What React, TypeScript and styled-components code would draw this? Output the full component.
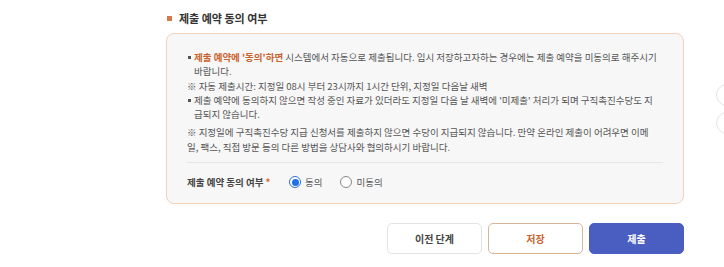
import React from "react";
import styled, { createGlobalStyle } from "styled-components";

const Global = createGlobalStyle`
  html, body { margin: 0; padding: 0; background: #ffffff; }
  body { font-family: "Noto Sans CJK KR", "Noto Sans", sans-serif; color: #444; }
  * { box-sizing: border-box; }
`;

const Page = styled.div`
  position: relative;
  width: 724px;
  height: 267px;
  overflow: hidden;
  padding: 11px 40px 0 166px;
`;

const SectionTitle = styled.div`
  display: flex;
  align-items: center;
  gap: 7px;
  height: 14px;
  font-size: 11px;
  font-weight: 600;
  color: #333;
  padding-left: 1px;
`;

const Square = styled.span`
  width: 5px;
  height: 5px;
  background: #d97a45;
`;

const Box = styled.div`
  margin-top: 8px;
  height: 171px;
  border: 1px solid #f3d2bb;
  border-radius: 8px;
  background: #f7f7f7;
  padding: 16px 20px 0 20px;
`;

const List = styled.div`
  display: flex;
  flex-direction: column;
  font-size: 9.5px;
  line-height: 14.3px;
  color: #555;
  white-space: nowrap;
`;

const Bullet = styled.div`
  position: relative;
  padding-left: 7px;
  &::before {
    content: "";
    position: absolute;
    left: 1px;
    top: 6px;
    width: 3px;
    height: 3px;
    background: #555;
  }
`;

const Note = styled.div<{ $gap?: number }>`
  margin-top: ${(p) => p.$gap ?? 0}px;
`;

const Em = styled.strong`
  color: #c8632f;
  font-weight: 700;
`;

const Divider = styled.div`
  margin-top: 8px;
  height: 1px;
  background: #e6e6e6;
`;

const FieldRow = styled.div`
  display: flex;
  align-items: center;
  height: 38px;
  font-size: 9.5px;
`;

const FieldLabel = styled.span`
  font-weight: 600;
  color: #444;
  width: 102px;
`;

const Star = styled.span`
  color: #d9623a;
  margin-left: 2px;
`;

const RadioLabel = styled.label`
  display: inline-flex;
  align-items: center;
  gap: 4px;
  margin-right: 18px;
  color: #555;
`;

const RadioDot = styled.span<{ $on?: boolean }>`
  width: 12px;
  height: 12px;
  border-radius: 50%;
  border: 1px solid ${(p) => (p.$on ? "#2b6fe0" : "#888")};
  background: #fff;
  display: inline-flex;
  align-items: center;
  justify-content: center;
  &::after {
    content: "";
    width: 7px;
    height: 7px;
    border-radius: 50%;
    background: ${(p) => (p.$on ? "#1f6fe5" : "transparent")};
  }
`;

const Buttons = styled.div`
  display: flex;
  justify-content: flex-end;
  gap: 6px;
  margin-top: 19px;
`;

const Btn = styled.button<{ $variant: "plain" | "save" | "primary" }>`
  width: 95px;
  height: 31px;
  border-radius: 5px;
  font-family: inherit;
  font-size: 10px;
  font-weight: 700;
  cursor: pointer;
  border: 1px solid
    ${(p) =>
      p.$variant === "plain" ? "#e3e3e3" : p.$variant === "save" ? "#d8b597" : "#4a5ec1"};
  background: ${(p) => (p.$variant === "primary" ? "#4a5ec1" : "#fff")};
  color: ${(p) =>
    p.$variant === "plain" ? "#444" : p.$variant === "save" ? "#c8632f" : "#fff"};
`;

const EdgeCircle = styled.span<{ $top: number }>`
  position: absolute;
  left: 716px;
  top: ${(p) => p.$top}px;
  width: 22px;
  height: 22px;
  border-radius: 50%;
  border: 1px solid #e4e4e4;
  background: #fff;
`;

export default function App() {
  return (
    <>
      <Global />
      <Page>
        <SectionTitle>
          <Square />
          제출 예약 동의 여부
        </SectionTitle>
        <Box>
          <List>
            <Bullet>
              <Em>제출 예약에 '동의'하면</Em> 시스템에서 자동으로 제출됩니다. 임시 저장하고자하는 경우에는 제출 예약을 미동의로 해주시기
              <br />
              바랍니다.
            </Bullet>
            <Note>※ 자동 제출시간: 지정일 08시 부터 23시까지 1시간 단위, 지정일 다음날 새벽</Note>
            <Bullet>
              제출 예약에 동의하지 않으면 작성 중인 자료가 있더라도 지정일 다음 날 새벽에 '미제출' 처리가 되며 구직촉진수당도 지
              <br />
              급되지 않습니다.
            </Bullet>
            <Note $gap={4}>
              ※ 지정일에 구직촉진수당 지급 신청서를 제출하지 않으면 수당이 지급되지 않습니다. 만약 온라인 제출이 어려우면 이메
              <br />
              일, 팩스, 직접 방문 등의 다른 방법을 상담사와 협의하시기 바랍니다.
            </Note>
          </List>
          <Divider />
          <FieldRow>
            <FieldLabel>
              제출 예약 동의 여부<Star>*</Star>
            </FieldLabel>
            <RadioLabel>
              <RadioDot $on />
              동의
            </RadioLabel>
            <RadioLabel>
              <RadioDot />
              미동의
            </RadioLabel>
          </FieldRow>
        </Box>
        <Buttons>
          <Btn $variant="plain">이전 단계</Btn>
          <Btn $variant="save">저장</Btn>
          <Btn $variant="primary">제출</Btn>
        </Buttons>
        <EdgeCircle $top={84} />
        <EdgeCircle $top={112} />
      </Page>
    </>
  );
}
